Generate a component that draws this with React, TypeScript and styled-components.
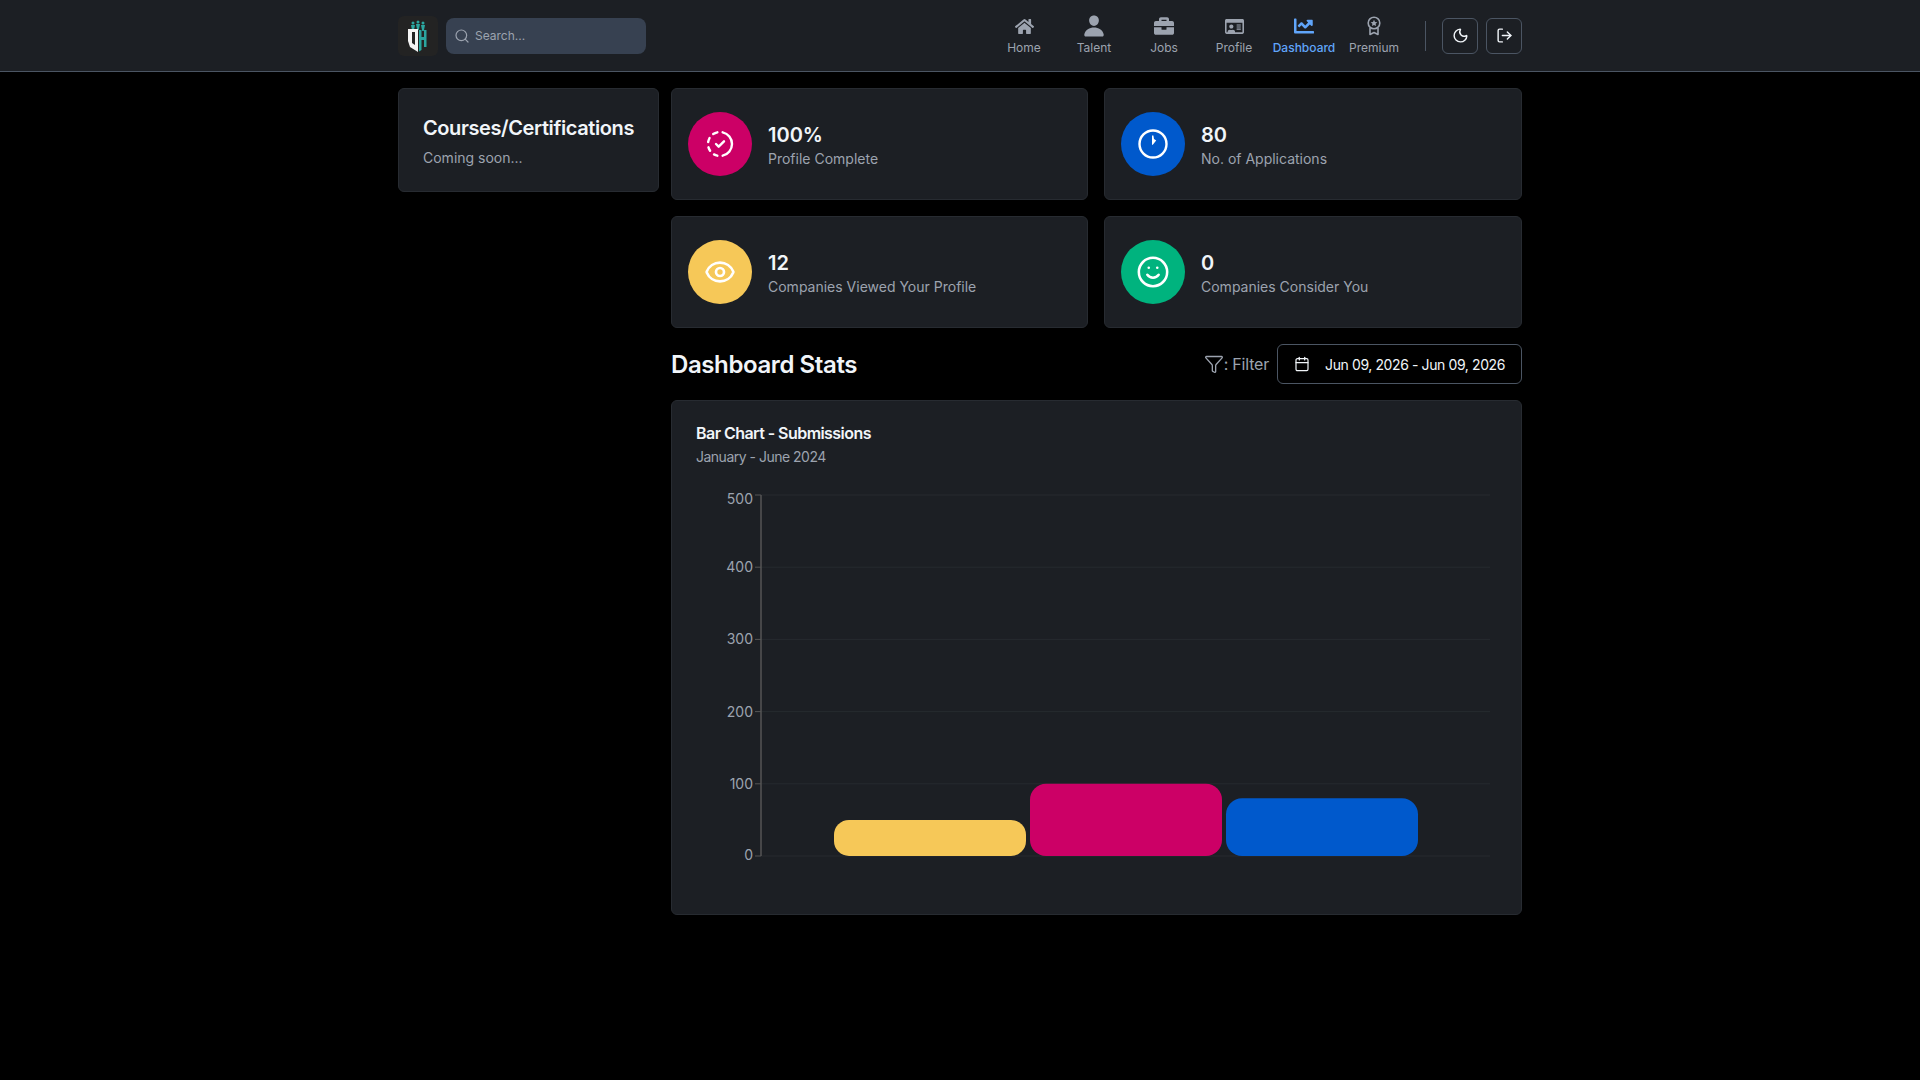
import React from "react";
import styled, { createGlobalStyle } from "styled-components";
import { FaHome, FaChartLine, FaRegIdCard, FaBriefcase } from "react-icons/fa";
import { IoPerson } from "react-icons/io5";
import { TbProgressCheck } from "react-icons/tb";
import { Search, Moon, LogOut, Eye, Smile, Filter, Calendar } from "lucide-react";

const GlobalStyle = createGlobalStyle`
  html, body {
    margin: 0;
    padding: 0;
    background: #000;
    min-height: 100%;
  }
  * {
    box-sizing: border-box;
  }
  body {
    font-family: "Inter", "Noto Sans", "Liberation Sans", sans-serif;
    color: #f1f5f9;
  }
`;

const PremiumIcon = () => (
  <svg width="18" height="20" viewBox="0 0 18 20" fill="none">
    <circle cx="9" cy="7" r="5.8" stroke="currentColor" strokeWidth="1.6" />
    <path d="M9 3.8 L10 6 L12.3 6.2 L10.6 7.8 L11.1 10 L9 8.9 L6.9 10 L7.4 7.8 L5.7 6.2 L8 6 Z" fill="currentColor" />
    <path d="M5 12 V18.5 L9 16.5 L13 18.5 V12" stroke="currentColor" strokeWidth="1.6" strokeLinejoin="round" />
  </svg>
);

const navItems = [
  { label: "Home", icon: <FaHome size={19} /> },
  { label: "Talent", icon: <IoPerson size={24} /> },
  { label: "Jobs", icon: <FaBriefcase size={20} /> },
  { label: "Profile", icon: <FaRegIdCard size={19} /> },
  { label: "Dashboard", icon: <FaChartLine size={20} />, active: true },
  { label: "Premium", icon: <PremiumIcon /> },
];

const ClockIcon = () => (
  <svg width="32" height="32" viewBox="0 0 32 32" fill="none">
    <circle cx="16" cy="16" r="13.5" stroke="#fff" strokeWidth="2.4" />
    <path d="M15 7.5 L16.4 7.5 L17 11 L19.2 12.4 L15.6 17 L15 16.6 Z" fill="#fff" />
  </svg>
);

const stats = [
  { value: "100%", label: "Profile Complete", color: "#cc0066", icon: <TbProgressCheck size={32} strokeWidth={1.8} /> },
  { value: "80", label: "No. of Applications", color: "#0059cc", icon: <ClockIcon /> },
  { value: "12", label: "Companies Viewed Your Profile", color: "#f6c858", icon: <Eye size={32} strokeWidth={2} /> },
  { value: "0", label: "Companies Consider You", color: "#00b37e", icon: <Smile size={34} strokeWidth={1.8} /> },
];

// chart geometry, origin is the top left of the chart svg
const CHART_X = 65;
const CHART_END = 794;
const CHART_BOTTOM = 368;
const PER_UNIT = 0.722;

const ticks = [0, 100, 200, 300, 400, 500];

// the outer labels sit a little inside the plot, like recharts does it
const labelOffset = (tick: number) => {
  if (tick === 500) return 9;
  if (tick === 0) return 4;
  return 5;
};

const bars = [
  { x: 138, width: 192, value: 50, color: "#f6c858" },
  { x: 334, width: 192, value: 100, color: "#cc0066" },
  { x: 530, width: 192, value: 80, color: "#0059cc" },
];

const Logo = () => (
  <LogoBox>
    <svg width="40" height="40" viewBox="0 0 40 40">
      <g fill="#2ba6a0">
        <circle cx="15" cy="7" r="1.5" />
        <path d="M13 9 h4 l-1.2 6 h-1.6 Z" />
        <circle cx="20" cy="6" r="1.5" />
        <path d="M18 8 h4 l-1.2 6 h-1.6 Z" />
        <circle cx="25" cy="7" r="1.5" />
        <path d="M23 9 h4 l-1.2 6 h-1.6 Z" />
      </g>
      <path
        fillRule="evenodd"
        d="M10 13 H20 V36 L12 31 L10 25 Z M14 16 V27 L17 29 V16 Z"
        fill="#f4f4f4"
      />
      <path d="M21 14 H23.5 V21 H26 V14 H28.5 V31 H26 V24 H23.5 V34 L21 35.5 Z" fill="#2ba6a0" />
    </svg>
  </LogoBox>
);

const App = () => {
  return (
    <>
      <GlobalStyle />
      <Header>
        <HeaderInner>
          <Logo />
          <SearchBox>
            <Search size={16} color="#9ca3af" strokeWidth={1.8} />
            <SearchInput placeholder="Search..." />
          </SearchBox>
          <Nav>
            {navItems.map((item) => (
              <NavItem key={item.label} $active={item.active}>
                <NavIcon>{item.icon}</NavIcon>
                <span>{item.label}</span>
              </NavItem>
            ))}
            <Divider />
            <IconButton>
              <Moon size={17} strokeWidth={2} />
            </IconButton>
            <IconButton>
              <LogOut size={17} strokeWidth={2} />
            </IconButton>
          </Nav>
        </HeaderInner>
      </Header>

      <Main>
        <SideCard>
          <SideTitle>Courses/Certifications</SideTitle>
          <SideText>Coming soon...</SideText>
        </SideCard>

        <Content>
          <StatsGrid>
            {stats.map((stat) => (
              <StatCard key={stat.label}>
                <StatCircle $color={stat.color}>{stat.icon}</StatCircle>
                <StatText>
                  <StatValue>{stat.value}</StatValue>
                  <StatLabel>{stat.label}</StatLabel>
                </StatText>
              </StatCard>
            ))}
          </StatsGrid>

          <StatsHeader>
            <StatsTitle>Dashboard Stats</StatsTitle>
            <FilterRow>
              <FilterLabel>
                <Filter size={20} strokeWidth={1.6} />
                <span>: Filter</span>
              </FilterLabel>
              <DateButton>
                <Calendar size={16} strokeWidth={1.8} />
                <span>Jun 09, 2026 - Jun 09, 2026</span>
              </DateButton>
            </FilterRow>
          </StatsHeader>

          <ChartCard>
            <ChartTitle>Bar Chart - Submissions</ChartTitle>
            <ChartSub>January - June 2024</ChartSub>
            <ChartSvg width="801" height="400" viewBox="0 0 801 400">
              {ticks.map((t) => {
                const y = CHART_BOTTOM - t * PER_UNIT;
                return (
                  <g key={t}>
                    <line x1={CHART_X} x2={CHART_END} y1={y} y2={y} stroke="#262a2f" />
                    <line x1={CHART_X - 6} x2={CHART_X} y1={y} y2={y} stroke="#555" />
                    <AxisLabel x={CHART_X - 8} y={y + labelOffset(t)} textAnchor="end">
                      {t}
                    </AxisLabel>
                  </g>
                );
              })}
              <line x1={CHART_X} x2={CHART_X} y1={CHART_BOTTOM - 361} y2={CHART_BOTTOM} stroke="#555" strokeWidth="1.5" />
              {bars.map((bar) => {
                const h = bar.value * PER_UNIT;
                return (
                  <rect
                    key={bar.x}
                    x={bar.x}
                    y={CHART_BOTTOM - h}
                    width={bar.width}
                    height={h}
                    rx={bar.value === 50 ? 15 : 16}
                    fill={bar.color}
                  />
                );
              })}
            </ChartSvg>
          </ChartCard>
        </Content>
      </Main>
    </>
  );
};

const Header = styled.header`
  height: 72px;
  background: #1c1f24;
  border-bottom: 1px solid #4b5563;
`;

const HeaderInner = styled.div`
  width: 1124px;
  height: 71px;
  margin: 0 auto;
  display: flex;
  align-items: center;
`;

const LogoBox = styled.div`
  width: 40px;
  height: 40px;
  border-radius: 6px;
  background: #232323;
  margin-right: 8px;
`;

const SearchBox = styled.div`
  width: 200px;
  height: 36px;
  border-radius: 8px;
  background: #374151;
  display: flex;
  align-items: center;
  gap: 3px;
  padding-left: 8px;
`;

const SearchInput = styled.input`
  flex: 1;
  min-width: 0;
  background: transparent;
  border: none;
  outline: none;
  font-family: inherit;
  font-size: 12px;
  color: #fff;

  &::placeholder {
    color: #9ca3af;
    opacity: 1;
  }
`;

const Nav = styled.nav`
  margin-left: auto;
  display: flex;
  align-items: center;
`;

const NavItem = styled.a<{ $active?: boolean }>`
  width: 70px;
  display: flex;
  flex-direction: column;
  align-items: center;
  gap: 3px;
  font-size: 12px;
  line-height: 16px;
  white-space: nowrap;
  color: ${({ $active }) => ($active ? "#60a5fa" : "#9ca3af")};
  font-weight: ${({ $active }) => ($active ? 500 : 400)};
  cursor: pointer;
`;

const NavIcon = styled.span`
  height: 22px;
  display: flex;
  align-items: center;
  justify-content: center;
`;

const Divider = styled.div`
  width: 1px;
  height: 30px;
  background: #4b5563;
  margin: 0 16px;
`;

const IconButton = styled.button`
  width: 36px;
  height: 36px;
  padding: 0;
  background: transparent;
  border: 1px solid #4b5563;
  border-radius: 6px;
  color: #f1f5f9;
  display: flex;
  align-items: center;
  justify-content: center;
  cursor: pointer;

  & + & {
    margin-left: 8px;
  }
`;

const Main = styled.main`
  width: 1124px;
  margin: 0 auto;
  padding-top: 16px;
  display: grid;
  grid-template-columns: 261px 851px;
  column-gap: 12px;
  align-items: start;
`;

const SideCard = styled.section`
  height: 104px;
  padding: 25px 24px 0;
  background: #1c1f24;
  border: 1px solid #272b31;
  border-radius: 6px;
`;

const SideTitle = styled.h2`
  margin: 0;
  font-size: 20px;
  line-height: 28px;
  font-weight: 600;
  white-space: nowrap;
  letter-spacing: -0.4px;
`;

const SideText = styled.p`
  margin: 6px 0 0;
  font-size: 14px;
  line-height: 20px;
  color: #9ca3af;
`;

const Content = styled.div`
  display: flex;
  flex-direction: column;
`;

const StatsGrid = styled.div`
  display: grid;
  grid-template-columns: 417px 418px;
  gap: 16px;
`;

const StatCard = styled.div`
  height: 112px;
  padding: 0 16px;
  background: #1c1f24;
  border: 1px solid #272b31;
  border-radius: 6px;
  display: flex;
  align-items: center;
  gap: 16px;
`;

const StatCircle = styled.div<{ $color: string }>`
  width: 64px;
  height: 64px;
  border-radius: 50%;
  background: ${({ $color }) => $color};
  color: #fff;
  display: flex;
  align-items: center;
  justify-content: center;
`;

const StatText = styled.div`
  padding-top: 2px;
`;

const StatValue = styled.div`
  font-size: 20px;
  line-height: 28px;
  font-weight: 600;
`;

const StatLabel = styled.div`
  font-size: 14px;
  line-height: 20px;
  color: #9ca3af;
`;

const StatsHeader = styled.div`
  margin: 16px 0;
  height: 40px;
  display: flex;
  align-items: center;
  justify-content: space-between;
`;

const StatsTitle = styled.h2`
  margin: 0;
  padding-top: 2px;
  font-size: 24px;
  line-height: 32px;
  font-weight: 600;
  letter-spacing: -0.4px;
`;

const FilterRow = styled.div`
  display: flex;
  align-items: center;
  gap: 8px;
`;

const FilterLabel = styled.div`
  display: flex;
  align-items: center;
  font-size: 16px;
  letter-spacing: -0.2px;
  color: #9ca3af;
`;

const DateButton = styled.button`
  width: 245px;
  height: 40px;
  padding: 0 16px;
  background: transparent;
  border: 1px solid #4b5563;
  border-radius: 6px;
  color: #f1f5f9;
  font-family: inherit;
  font-size: 14px;
  display: flex;
  align-items: center;
  justify-content: space-between;
  white-space: nowrap;
  letter-spacing: -0.4px;
  cursor: pointer;
`;

const ChartCard = styled.section`
  height: 515px;
  padding: 20px 24px 0;
  background: #1c1f24;
  border: 1px solid #272b31;
  border-radius: 6px;
`;

const ChartTitle = styled.h3`
  margin: 0;
  font-size: 16px;
  line-height: 24px;
  font-weight: 600;
  letter-spacing: -0.55px;
`;

const ChartSub = styled.p`
  margin: 0;
  font-size: 14px;
  line-height: 24px;
  letter-spacing: -0.5px;
  color: #9ca3af;
`;

const ChartSvg = styled.svg`
  display: block;
  margin-top: 19px;
`;

const AxisLabel = styled.text`
  font-family: "Inter", sans-serif;
  font-size: 14px;
  fill: #9ca3af;
`;

export default App;
